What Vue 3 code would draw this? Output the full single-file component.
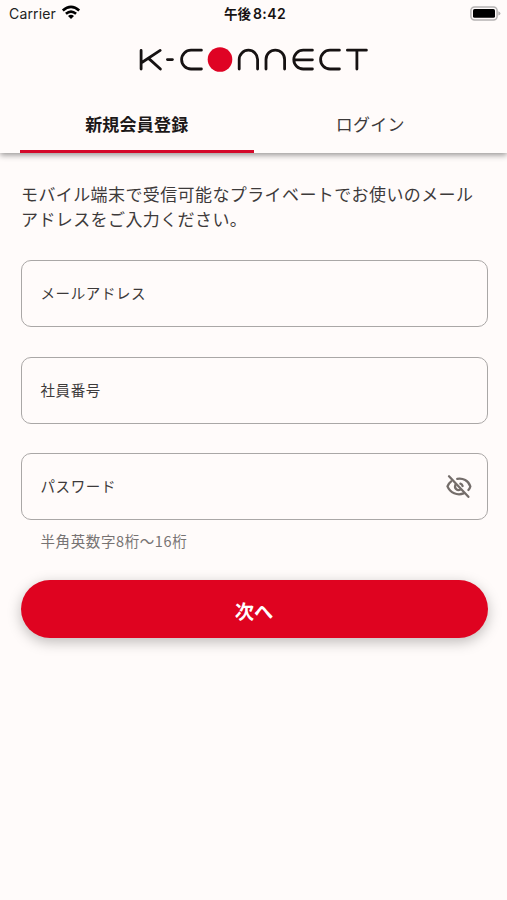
<script setup>
import { ref } from 'vue'

const tabs = ['新規会員登録', 'ログイン']
const active = ref(0)
const fields = [
  { label: 'メールアドレス', secret: false },
  { label: '社員番号', secret: false },
  { label: 'パスワード', secret: true },
]
</script>

<template>
  <div class="screen">
    <header class="header">
      <div class="status">
        <div class="carrier">
          <span>Carrier</span>
          <svg class="wifi" width="20" height="15" viewBox="0 0 20 15">
            <g fill="none" stroke="#000" stroke-width="2.6">
              <path d="M1.8 5.4Q10 -1.8 18.2 5.4" />
              <path d="M4.9 8.8Q10 4.4 15.1 8.8" />
            </g>
            <path d="M7 11Q10 8.5 13 11L10 14Z" />
          </svg>
        </div>
        <div class="clock">午後<span class="digits">8:42</span></div>
        <svg class="battery" width="31" height="15" viewBox="0 0 31 15">
          <rect x="0.9" y="0.9" width="26.2" height="13" rx="3.6" fill="#fffafa" stroke="#b5b2b2" stroke-width="1.5" />
          <rect x="3" y="3" width="22" height="8.8" rx="1.6" fill="#000" />
          <path d="M28.3 5.2Q30.5 6 30.5 7.4T28.3 9.6Z" fill="#b5b2b2" />
        </svg>
      </div>

      <svg class="logo" width="230" height="26" viewBox="0 0 230 26" role="img" aria-label="K-CONNECT">
        <g fill="none" stroke="#161212" stroke-width="2.8" stroke-linecap="round" stroke-linejoin="round">
          <path d="M3.1 3.4V22M22.2 3.4L3.1 16M10.6 11.4L22.4 22" />
          <path d="M29.4 12.6H34.4" />
          <path d="M63.4 3.2H53A9.4 9.4 0 0 0 53 22H63.4" />
          <path d="M101.2 22V12.4A9.2 9.2 0 0 1 119.6 12.4V22" />
          <path d="M128 22V12.4A9.3 9.3 0 0 1 146.6 12.4V22" />
          <path d="M174.4 3.2H165.2A9.4 9.4 0 0 0 165.2 22H174.4M156 12.8H174.4" />
          <path d="M201.4 3.2H192A9.4 9.4 0 0 0 192 22H201.4" />
          <path d="M209.4 3.2H228.4M218.9 3.2V22" />
        </g>
        <circle cx="82" cy="12.5" r="12.3" fill="#df0324" />
      </svg>

      <nav class="tabs">
        <button
          v-for="(tab, i) in tabs"
          :key="tab"
          class="tab"
          :class="{ active: active === i }"
          @click="active = i"
        >{{ tab }}</button>
      </nav>
    </header>

    <main class="content">
      <p class="lead">モバイル端末で受信可能なプライベートでお使いのメールアドレスをご入力ください。</p>
      <div class="fields">
        <div v-for="field in fields" :key="field.label" class="field">
          <span>{{ field.label }}</span>
          <svg v-if="field.secret" class="eye" width="28" height="26" viewBox="0 0 28 26">
            <g fill="none" stroke="#746d6a" stroke-width="2.3" stroke-linecap="round">
              <path d="M12.2 4.9C18 3.9 23.4 6.6 25.3 12.4Q24.8 14.5 23.4 16" />
              <path d="M6.2 7.3Q3.5 9.3 2.5 12.4C5.1 19 12.4 21.8 18.6 19.4" />
              <path d="M10.4 10.8C9 14.5 12.3 17.2 15.4 15.6" />
              <path d="M15.4 9.6Q17.2 10.2 17.6 12" />
              <path d="M4 2.3L23.4 22.8" />
            </g>
          </svg>
        </div>
      </div>
      <p class="hint">半角英数字8桁〜16桁</p>
      <button class="submit">次へ</button>
    </main>
  </div>
</template>

<style>
body {
  background: #fffbfa;
}
</style>

<style scoped>
.screen {
  min-height: 900px;
  box-sizing: border-box;
  background: #fffbfa;
  color: #3d3a3a;
  font-family: "Noto Sans CJK JP", sans-serif;
}
.header {
  height: 153px;
  display: flex;
  flex-direction: column;
  background: #fffbfa;
  box-shadow: 0 2px 6px rgba(0, 0, 0, 0.42);
}
.status {
  height: 27px;
  display: grid;
  grid-template-columns: 1fr auto 1fr;
  align-items: center;
  padding: 0 6px 0 9px;
  font-size: 14px;
  color: #222;
}
.carrier {
  display: flex;
  align-items: center;
  gap: 5px;
  font-family: Inter, sans-serif;
  font-size: 14px;
  letter-spacing: 0.15px;
}
.wifi {
  margin-top: -2px;
}
.clock {
  font-size: 13.5px;
  font-weight: 700;
  line-height: 20px;
  color: #161212;
}
.digits {
  margin-left: 2px;
  font-family: Inter, sans-serif;
  font-size: 14px;
  font-weight: 600;
  letter-spacing: 0.4px;
}
.battery {
  justify-self: end;
  margin-top: -1px;
}
.logo {
  display: block;
  margin: 20px 0 0 138px;
}
.tabs {
  flex: 1;
  display: grid;
  grid-template-columns: 1fr 1fr;
  margin-top: 22px;
  padding: 0 20px;
}
.tab {
  padding: 2px 0 0;
  border: 0;
  border-bottom: 3px solid transparent;
  background: none;
  color: #3d3a3a;
  font: 400 17px/25px "Noto Sans CJK JP", sans-serif;
  letter-spacing: 0.2px;
}
.tab.active {
  color: #1c1818;
  font-weight: 700;
  border-bottom-color: #d4092a;
}
.content {
  display: flex;
  flex-direction: column;
  padding: 29px 19.5px 0 20.5px;
}
.lead {
  margin: 0 -10px 0 0.5px;
  padding-right: 20px;
  font-size: 17px;
  line-height: 24.5px;
  letter-spacing: 0.4px;
}
.fields {
  display: grid;
  gap: 29.5px;
  margin-top: 29px;
}
.field {
  height: 67px;
  display: flex;
  align-items: center;
  justify-content: space-between;
  box-sizing: border-box;
  padding: 0 14px 0 19px;
  border: 1.5px solid #aaa7a6;
  border-radius: 10px;
  font-size: 14.5px;
  letter-spacing: 0.6px;
}
.field span {
  margin-top: -2px;
}
.hint {
  margin: 10px 0 0 20px;
  color: #777373;
  font-size: 14.5px;
  line-height: 22px;
  letter-spacing: 0.6px;
}
.submit {
  height: 57.5px;
  margin-top: 28px;
  padding: 4px 0 0;
  border: 0;
  border-radius: 29px;
  background: #df0320;
  box-shadow: 0 4px 14px rgba(0, 0, 0, 0.26);
  color: #fff;
  font: 700 19.3px/28px "Noto Sans CJK JP", sans-serif;
}
</style>
